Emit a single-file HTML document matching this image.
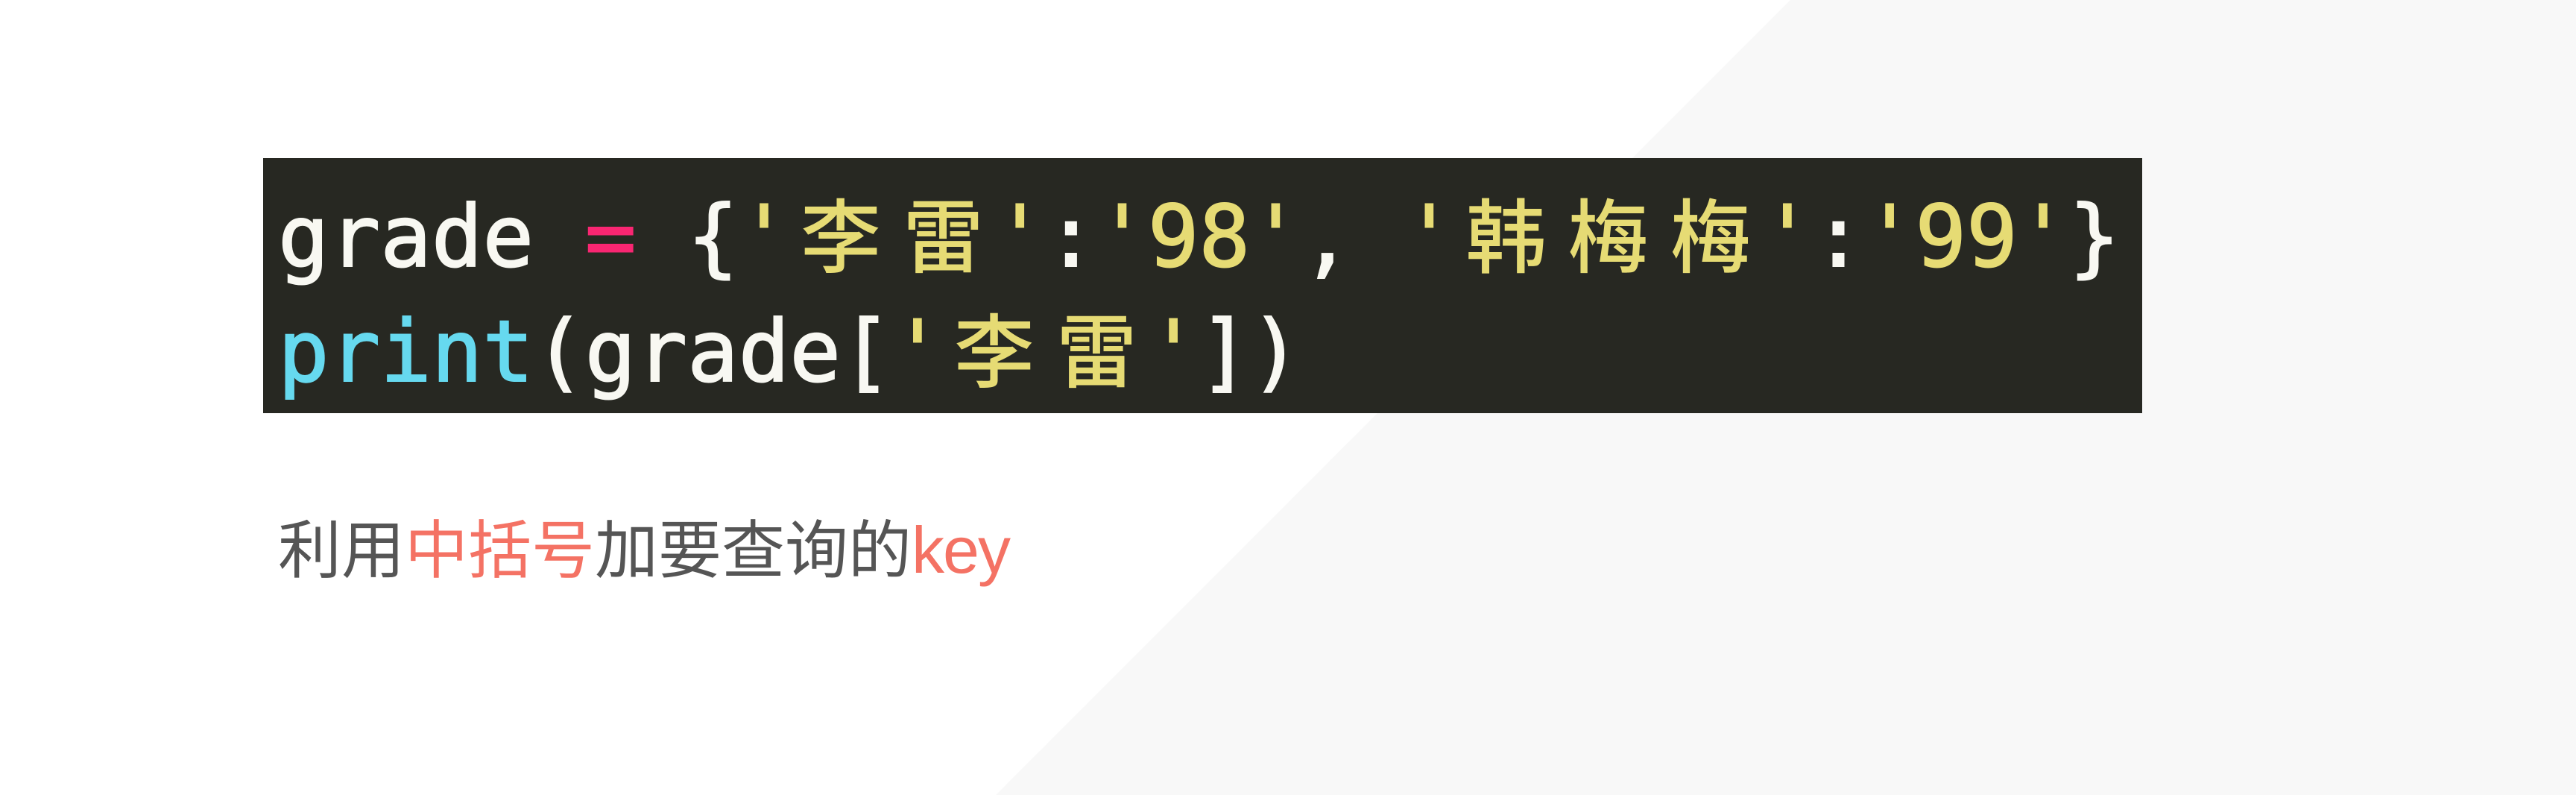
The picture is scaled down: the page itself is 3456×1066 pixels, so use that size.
<!DOCTYPE html>
<html><head><meta charset="utf-8"><style>
html,body{margin:0;padding:0}
body{width:3456px;height:1066px;position:relative;overflow:hidden;background:#fff}
.bg{position:absolute;left:0;top:0}
.code{position:absolute;left:353px;top:212px;width:2521px;height:342px;background:#272822}
.line{position:absolute;left:20px;font-family:"DejaVu Sans Mono","Liberation Mono","Noto Sans CJK SC",monospace;font-size:114px;line-height:1;white-space:pre;color:#f8f8f2;-webkit-text-stroke:2px currentColor}
.c{display:inline-block;width:137.3px;text-align:center;font-family:"Noto Sans CJK SC",sans-serif;font-size:108px;font-weight:500;-webkit-text-stroke:0}
.y{color:#e6db74}.p{color:#f92672}.b{color:#66d9ef}
.t{position:absolute;left:373px;top:694px;font-family:"Liberation Sans","Noto Sans CJK SC",sans-serif;font-size:85px;line-height:1;letter-spacing:0;color:#555;white-space:nowrap}
.r{color:#f47264}
</style></head><body>
<svg class="bg" width="3456" height="1066"><polygon points="2402,0 3456,0 3456,1066 1336,1066" fill="#f8f8f8"/></svg>
<div class="code">
<div class="line" style="top:45px">grade <span class="p">=</span> {<span class="y">'<span class="c">李</span><span class="c">雷</span>'</span>:<span class="y">'98'</span>, <span class="y">'<span class="c">韩</span><span class="c">梅</span><span class="c">梅</span>'</span>:<span class="y">'99'</span>}</div>
<div class="line" style="top:199px"><span class="b">print</span>(grade[<span class="y">'<span class="c">李</span><span class="c">雷</span>'</span>])</div>
</div>
<div class="t">利用<span class="r">中括号</span>加要查询的<span class="r" style="font-size:88px;letter-spacing:-2px">key</span></div>
</body></html>
